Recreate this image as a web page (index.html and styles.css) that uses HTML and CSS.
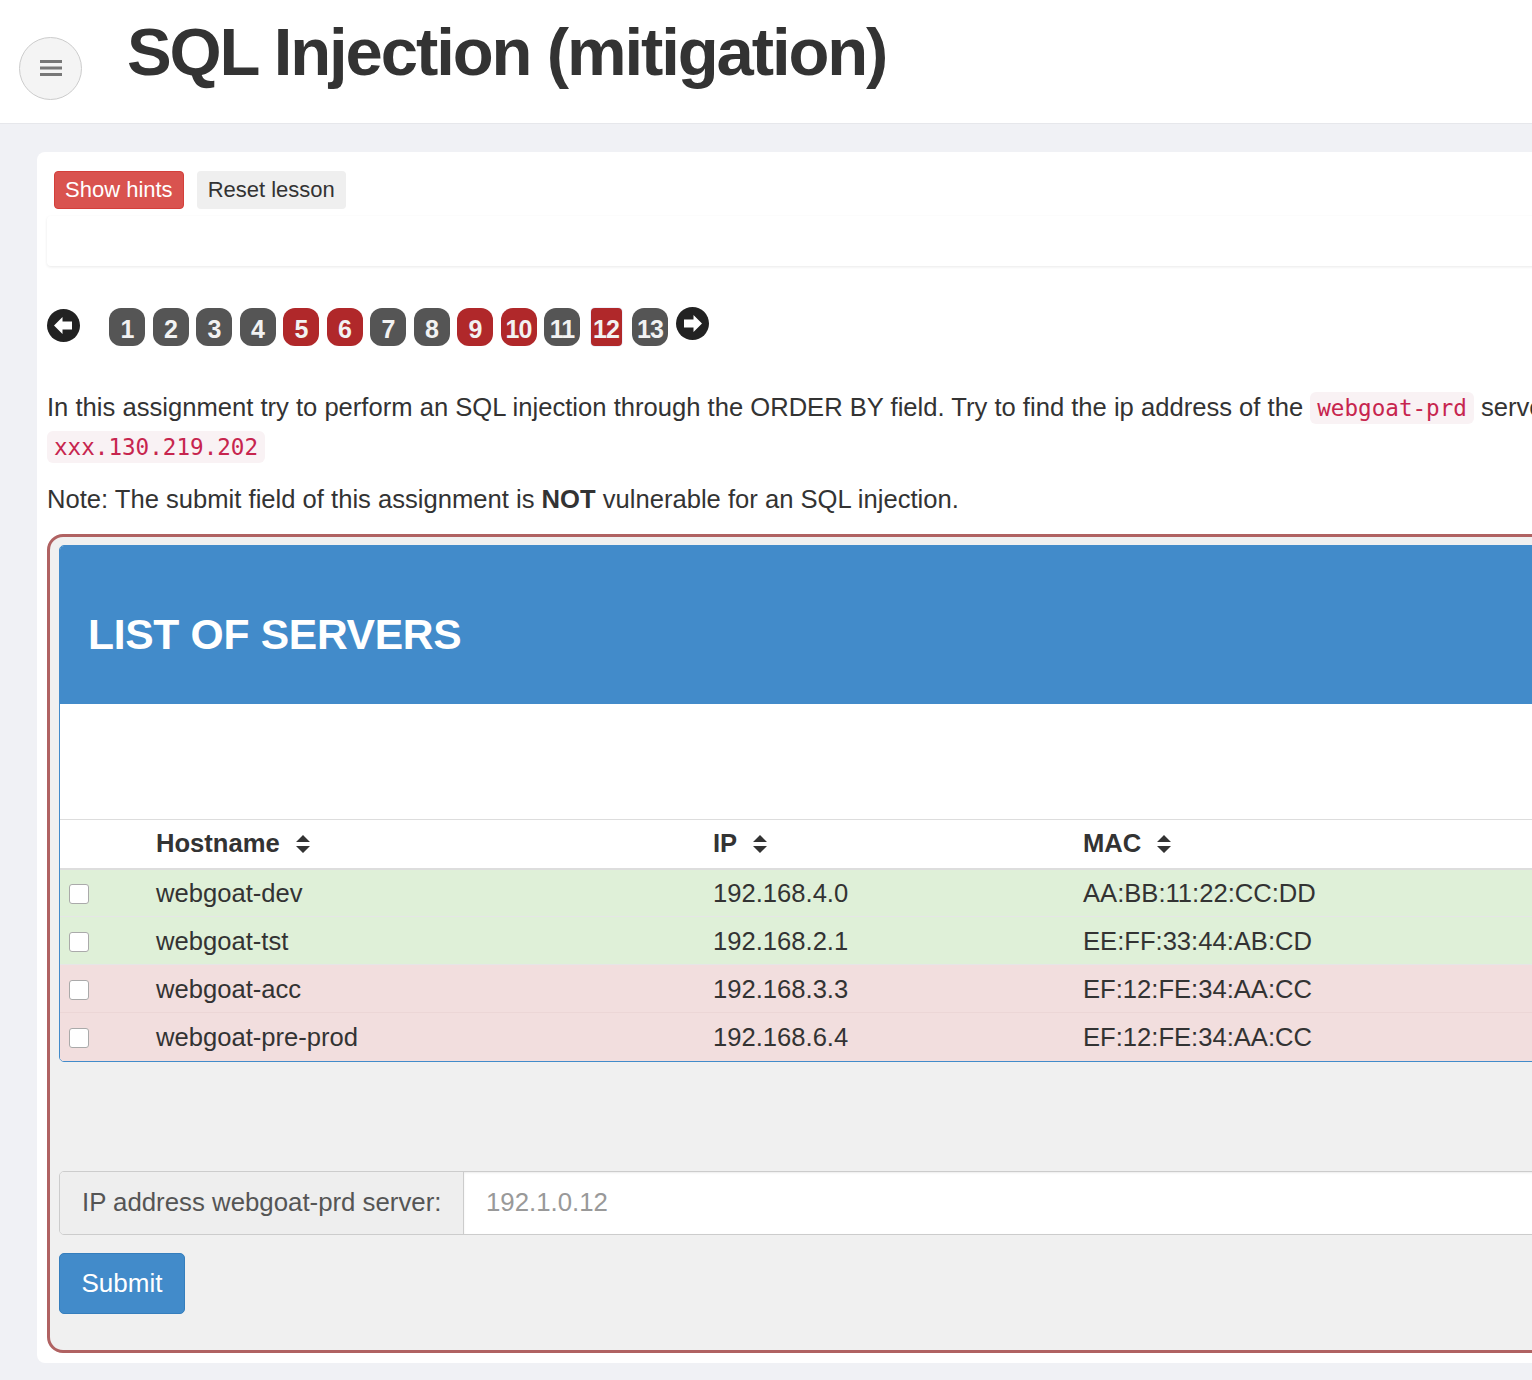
FILE: index.html
```html
<!DOCTYPE html>
<html>
<head>
<meta charset="utf-8">
<link rel="stylesheet" href="styles.css">
</head>
<body>
<header class="topbar">
  <button class="menu-btn" aria-label="menu">
    <svg width="22" height="18" viewBox="0 0 22 18"><rect x="0" y="1" width="22" height="3" fill="#777"/><rect x="0" y="7.5" width="22" height="3" fill="#777"/><rect x="0" y="14" width="22" height="3" fill="#777"/></svg>
  </button>
  <h1 class="title">SQL Injection (mitigation)</h1>
</header>
<main class="main">
  <section class="card">
    <div class="lesson-buttons">
      <button class="btn btn-hints">Show hints</button>
      <button class="btn btn-reset">Reset lesson</button>
    </div>
    <div class="hints-box"></div>
    <nav class="pager">
      <span class="arrow arrow-left"><svg width="33" height="33" viewBox="0 0 33 33"><circle cx="16.5" cy="16.5" r="16.5" fill="#222"/><path d="M7 16.5 L15.5 8 L15.5 12.5 L25 12.5 L25 20.5 L15.5 20.5 L15.5 25 Z" fill="#fff"/></svg></span>
      <div class="pages">
        <span class="pg">1</span>
        <span class="pg">2</span>
        <span class="pg">3</span>
        <span class="pg">4</span>
        <span class="pg red">5</span>
        <span class="pg red">6</span>
        <span class="pg">7</span>
        <span class="pg">8</span>
        <span class="pg red">9</span>
        <span class="pg red">10</span>
        <span class="pg">11</span>
        <span class="pg red current">12</span>
        <span class="pg">13</span>
      </div>
      <span class="arrow arrow-right"><svg width="33" height="33" viewBox="0 0 33 33"><circle cx="16.5" cy="16.5" r="16.5" fill="#222"/><path d="M26 16.5 L17.5 8 L17.5 12.5 L8 12.5 L8 20.5 L17.5 20.5 L17.5 25 Z" fill="#fff"/></svg></span>
    </nav>
    <p class="text first"><span class="nowrap">In this assignment try to perform an SQL injection through the ORDER BY field. Try to find the ip address of the <code>webgoat-prd</code> server, guessing the complete ip address might take too long so we give you the last part:</span><br><code>xxx.130.219.202</code></p>
    <p class="text">Note: The submit field of this assignment is <b>NOT</b> vulnerable for an SQL injection.</p>
    <div class="assignment">
      <div class="panel">
        <div class="panel-heading"><h3>LIST OF SERVERS</h3></div>
        <div class="panel-body">
          <div class="spacer"></div>
          <table class="servers">
            <thead>
              <tr>
                <th class="c-check"></th>
                <th class="c-host">Hostname <span class="sort"><svg width="16" height="22" viewBox="0 0 16 22"><path d="M1 9 L8 2 L15 9 Z M1 13 L15 13 L8 20 Z" fill="#333"/></svg></span></th>
                <th class="c-ip">IP <span class="sort"><svg width="16" height="22" viewBox="0 0 16 22"><path d="M1 9 L8 2 L15 9 Z M1 13 L15 13 L8 20 Z" fill="#333"/></svg></span></th>
                <th class="c-mac">MAC <span class="sort"><svg width="16" height="22" viewBox="0 0 16 22"><path d="M1 9 L8 2 L15 9 Z M1 13 L15 13 L8 20 Z" fill="#333"/></svg></span></th>
                <th class="c-desc"></th>
              </tr>
            </thead>
            <tbody>
              <tr class="ok"><td class="c-check"><span class="cb"></span></td><td>webgoat-dev</td><td>192.168.4.0</td><td>AA:BB:11:22:CC:DD</td><td></td></tr>
              <tr class="ok"><td class="c-check"><span class="cb"></span></td><td>webgoat-tst</td><td>192.168.2.1</td><td>EE:FF:33:44:AB:CD</td><td></td></tr>
              <tr class="bad"><td class="c-check"><span class="cb"></span></td><td>webgoat-acc</td><td>192.168.3.3</td><td>EF:12:FE:34:AA:CC</td><td></td></tr>
              <tr class="bad"><td class="c-check"><span class="cb"></span></td><td>webgoat-pre-prod</td><td>192.168.6.4</td><td>EF:12:FE:34:AA:CC</td><td></td></tr>
            </tbody>
          </table>
        </div>
      </div>
      <form class="answer">
        <div class="input-group">
          <span class="addon">IP address webgoat-prd server:</span>
          <input class="field" type="text" placeholder="192.1.0.12">
        </div>
        <button type="button" class="btn btn-submit">Submit</button>
      </form>
    </div>
  </section>
</main>
</body>
</html>
```
FILE: styles.css
```css
html, body {
  margin: 0;
  padding: 0;
  overflow: hidden;
  background: #f0f1f5;
  font-family: "Liberation Sans", Arial, sans-serif;
  color: #333;
}
.topbar {
  height: 123px;
  background: #fff;
  border-bottom: 1px solid #e6e7eb;
  display: flex;
  align-items: center;
  box-sizing: content-box;
}
.menu-btn {
  width: 63px;
  height: 63px;
  margin: 13px 0 0 19px;
  border-radius: 50%;
  border: 1px solid #ccc;
  background: #f4f4f4;
  display: flex;
  align-items: center;
  justify-content: center;
  padding: 0;
}
.title {
  margin: 0 0 20px 45px;
  font-size: 67px;
  font-weight: 700;
  letter-spacing: -2.1px;
  color: #333;
  white-space: nowrap;
}
.main {
  padding: 28px 0 0 37px;
  width: 1900px;
}
.card {
  background: #fff;
  border-radius: 8px;
  padding: 19px 0 10px 10px;
}
.lesson-buttons {
  display: flex;
  gap: 13px;
  padding-left: 7px;
}
.btn {
  font-family: "Liberation Sans", Arial, sans-serif;
  font-size: 22px;
  border-radius: 4px;
  padding: 0 10px;
  height: 38px;
  border: 1px solid transparent;
}
.btn-hints {
  background: #d9534f;
  border-color: #d43f3a;
  color: #fff;
}
.btn-reset {
  background: #efefef;
  color: #333;
}
.hints-box {
  height: 50px;
  margin-top: 7px;
  background: #fff;
  border-radius: 4px;
  box-shadow: 0 1px 3px rgba(0,0,0,0.09);
}
.pager {
  display: flex;
  align-items: center;
  margin-top: 41px;
  height: 40px;
}
.arrow { display: flex; }
.arrow-left { margin-top: -4px; }
.arrow-right { margin-top: -8px; margin-left: 8px; }
.pages {
  display: flex;
  gap: 7.5px;
  margin-left: 29px;
  align-items: center;
}
.pg {
  width: 36px;
  height: 38px;
  border-radius: 12px;
  background: #555;
  color: #f2f2f2;
  font-weight: 700;
  font-size: 25px;
  display: flex;
  align-items: center;
  justify-content: center;
  padding-top: 4px;
  box-sizing: border-box;
  letter-spacing: -1px;
}
.pg.red { background: #b0282a; }
.pg.current {
  width: 31px;
  border-radius: 4px;
  box-shadow: 0 0 0 1px #eef0fb;
  margin: 0 3px;
}
.text {
  font-size: 25.6px;
  line-height: 38px;
  margin: 0;
}
.text.first { margin-top: 41px; }
.text + .text { margin-top: 14px; }
.nowrap { white-space: nowrap; }
code {
  font-family: "DejaVu Sans Mono", "Liberation Mono", monospace;
  font-size: 22.6px;
  color: #c7254e;
  background: #f9f2f4;
  border-radius: 6px;
  padding: 3px 7px;
}
.assignment {
  margin-top: 16px;
  border: 3px solid #b06262;
  border-radius: 16px;
  background: #f0f0f0;
  padding: 8px 0 36px 9px;
}
.panel {
  border: 1px solid #428bca;
  border-radius: 5px;
  background: #fff;
  overflow: hidden;
}
.panel-heading {
  background: #428bca;
  height: 158px;
  display: flex;
  align-items: center;
  padding-left: 28px;
}
.panel-heading h3 {
  margin: 19px 0 0 0;
  color: #fff;
  font-size: 42.6px;
  font-weight: 700;
  letter-spacing: -0.3px;
}
.spacer { height: 115px; }
.servers {
  border-collapse: collapse;
  font-size: 25.6px;
  table-layout: fixed;
  width: 1800px;
}
.servers th, .servers td {
  text-align: left;
  padding: 0 10px;
}
.servers thead tr {
  height: 49px;
  border-top: 1px solid #ddd;
  border-bottom: 2px solid #ddd;
}
.servers th { font-weight: 700; padding-top: 3px; }
.sort { display: inline-block; vertical-align: -3px; margin-left: 8px; }
.servers tbody tr { height: 48px; }
.servers tbody td { padding-top: 2px; }
.servers tbody tr + tr { border-top: 1px solid #e6e6e6; }
.servers tr.ok { background: #dff0d8; }
.servers tr.bad { background: #f2dede; }
.servers tr.bad + tr.bad { border-top-color: #ecd6d6; }
.c-check { width: 66px; }
.c-host { width: 537px; }
.c-ip { width: 350px; }
.c-mac { width: 400px; }
.c-desc { width: auto; }
.servers td.c-check { padding-left: 9px; }
.cb {
  display: block;
  width: 18px;
  height: 18px;
  border: 1px solid #aaa;
  border-radius: 3px;
  background: #fff;
}
.answer { margin-top: 109px; }
.input-group {
  display: flex;
  height: 62px;
  border: 1px solid #ccc;
  border-radius: 5px;
  overflow: hidden;
}
.addon {
  width: 381px;
  background: #eee;
  border-right: 1px solid #ccc;
  display: flex;
  align-items: center;
  padding-left: 22px;
  font-size: 25.8px;
  color: #555;
  flex: none;
}
.field {
  flex: 1;
  border: 0;
  font-family: "Liberation Sans", Arial, sans-serif;
  font-size: 25.8px;
  padding-left: 22px;
  outline: none;
  box-shadow: inset 0 1px 2px rgba(0,0,0,0.08);
}
.field::placeholder { color: #999; }
.btn-submit {
  margin-top: 18px;
  height: 61px;
  width: 126px;
  background: #428bca;
  border-color: #357ebd;
  color: #fff;
  font-size: 26px;
  border-radius: 5px;
}
```
